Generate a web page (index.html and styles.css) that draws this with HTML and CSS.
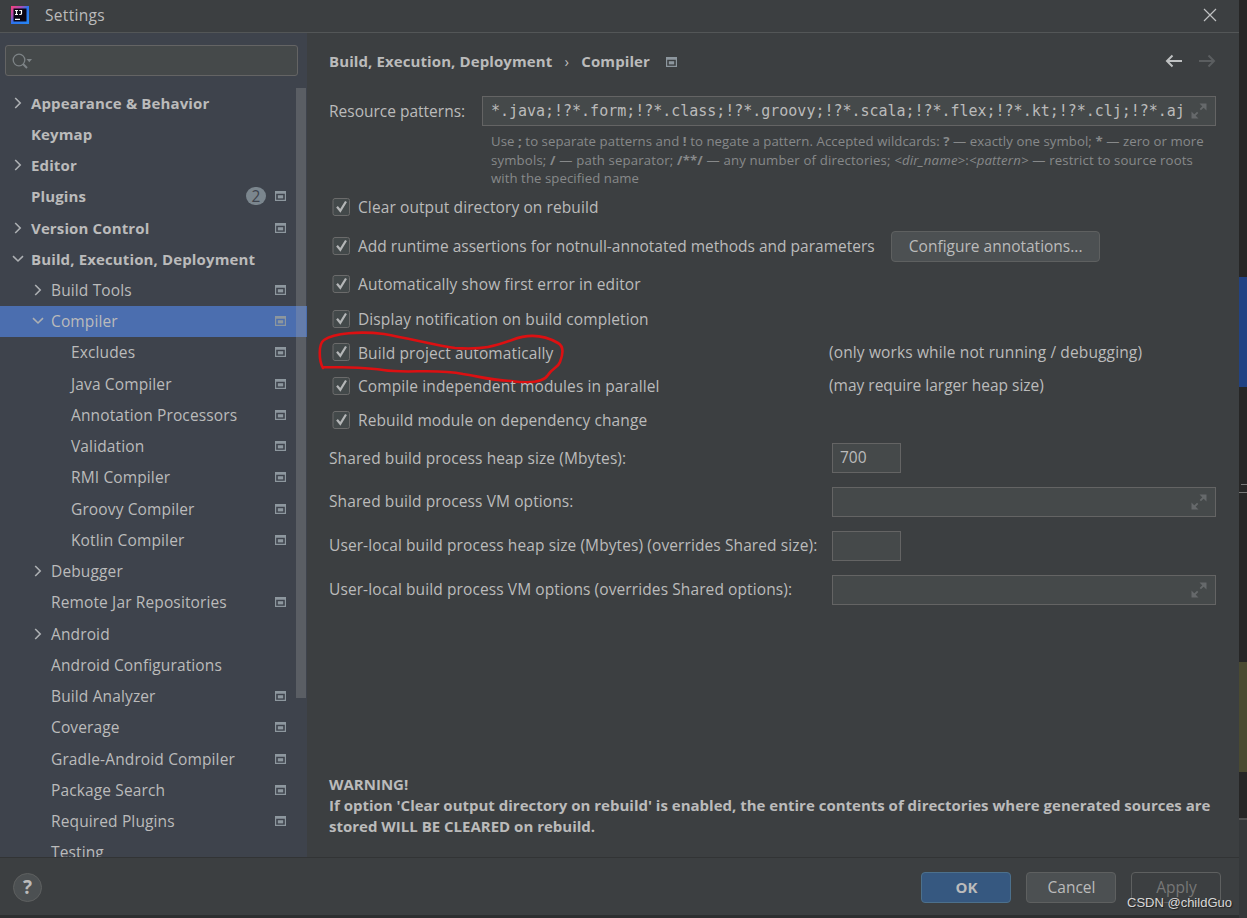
FILE: index.html
```
<!DOCTYPE html>
<html lang="en">
<head>
    <meta charset="UTF-8">
    <meta name="viewport" content="width=device-width, initial-scale=1.0">
    <title>Settings</title>
    <link rel="stylesheet" href="styles.css">
</head>
<body>
    <!-- Icons -->
    <svg class="sprite" width="0" height="0">
        <symbol id="right" viewBox="0 0 12 12"><path d="M3.2 1L8.200 6l-5 5" fill="none" stroke="currentColor" stroke-width="1.6"/></symbol>
        <symbol id="down" viewBox="0 0 12 12"><path d="M1 3.200L6 8l5-4.800" fill="none" stroke="currentColor" stroke-width="1.6"/></symbol>
        <symbol id="project" viewBox="0 0 11 10"><path d="M0 0h11v10H0zM1.200 2.800v6h8.600v-6z" fill="currentColor" fill-rule="evenodd"/><path d="M2.800 4.200h5.400v3.200H2.800z" fill="currentColor"/></symbol>
        <symbol id="check" viewBox="0 0 18 18"><rect x="1" y=".5" width="16.500" height="17" rx="2" fill="#43494a" stroke="#6b6b6b"/><path d="M5 8.800l3.300 4L14 3.500" fill="none" stroke="#b4b6b7" stroke-width="2.200"/></symbol>
        <symbol id="expand" viewBox="0 0 16 16"><path d="M8.500 0.500H15.500V7.500zM0.500 8.500V15.500H7.500z" fill="currentColor"/><path d="M14 2L9.300 6.700M2 14l4.700-4.700" stroke="currentColor" stroke-width="1.800"/></symbol>
    </svg>

    <div class="window">
        <div class="titlebar">
            <svg class="logo" width="18" height="18" viewBox="0 0 18 18">
                <defs>
                    <linearGradient id="lg" x1="0" y1="0" x2="1" y2="1">
                        <stop offset="0" stop-color="#f9417a"/>
                        <stop offset=".3" stop-color="#b04bb0"/>
                        <stop offset=".5" stop-color="#2b73ee"/>
                        <stop offset="1" stop-color="#2788f5"/>
                    </linearGradient>
                </defs>
                <rect width="18" height="18" fill="url(#lg)"/>
                <rect x="2.500" y="2.500" width="13" height="13" fill="#0b0614"/>
                <path d="M4 4.500h3M5.500 4.500v4M4 8.500h3M8.300 4.500h2.200v3q0 1-1.200 1h-1M4 13.300h5" fill="none" stroke="#fff" stroke-width="1.200"/>
            </svg>
            <span class="title">Settings</span>
            <svg class="close" width="14" height="14" viewBox="0 0 14 14"><path d="M1 1l12 12M13 1L1 13" stroke="#bfc1c2" stroke-width="1.200"/></svg>
        </div>

        <div class="body">
            <div class="sidebar">
                <div class="search">
                    <svg width="22" height="16" viewBox="0 0 22 16"><circle cx="7" cy="7" r="5.800" fill="none" stroke="#7d8386" stroke-width="1.300"/><path d="M11 11l4 4" stroke="#7d8386" stroke-width="2"/><path d="M14.500 6h5.500l-2.700 3.200z" fill="#7d8386"/></svg>
                </div>
                <div class="tree">
                    <div class="row bold"><svg class="arrow"><use href="#right"/></svg><span>Appearance &amp; Behavior</span></div>
                    <div class="row bold"><i class="arrow"></i><span>Keymap</span></div>
                    <div class="row bold"><svg class="arrow"><use href="#right"/></svg><span>Editor</span></div>
                    <div class="row bold"><i class="arrow"></i><span>Plugins</span><b class="count">2</b><svg class="project"><use href="#project"/></svg></div>
                    <div class="row bold"><svg class="arrow"><use href="#right"/></svg><span>Version Control</span><svg class="project"><use href="#project"/></svg></div>
                    <div class="row bold"><svg class="arrow"><use href="#down"/></svg><span>Build, Execution, Deployment</span></div>
                    <div class="row sub"><svg class="arrow"><use href="#right"/></svg><span>Build Tools</span><svg class="project"><use href="#project"/></svg></div>
                    <div class="row sub selected"><svg class="arrow"><use href="#down"/></svg><span>Compiler</span><svg class="project"><use href="#project"/></svg></div>
                    <div class="row leaf"><span>Excludes</span><svg class="project"><use href="#project"/></svg></div>
                    <div class="row leaf"><span>Java Compiler</span><svg class="project"><use href="#project"/></svg></div>
                    <div class="row leaf"><span>Annotation Processors</span><svg class="project"><use href="#project"/></svg></div>
                    <div class="row leaf"><span>Validation</span><svg class="project"><use href="#project"/></svg></div>
                    <div class="row leaf"><span>RMI Compiler</span><svg class="project"><use href="#project"/></svg></div>
                    <div class="row leaf"><span>Groovy Compiler</span><svg class="project"><use href="#project"/></svg></div>
                    <div class="row leaf"><span>Kotlin Compiler</span><svg class="project"><use href="#project"/></svg></div>
                    <div class="row sub"><svg class="arrow"><use href="#right"/></svg><span>Debugger</span></div>
                    <div class="row sub"><i class="arrow"></i><span>Remote Jar Repositories</span><svg class="project"><use href="#project"/></svg></div>
                    <div class="row sub"><svg class="arrow"><use href="#right"/></svg><span>Android</span></div>
                    <div class="row sub"><i class="arrow"></i><span>Android Configurations</span></div>
                    <div class="row sub"><i class="arrow"></i><span>Build Analyzer</span><svg class="project"><use href="#project"/></svg></div>
                    <div class="row sub"><i class="arrow"></i><span>Coverage</span><svg class="project"><use href="#project"/></svg></div>
                    <div class="row sub"><i class="arrow"></i><span>Gradle-Android Compiler</span><svg class="project"><use href="#project"/></svg></div>
                    <div class="row sub"><i class="arrow"></i><span>Package Search</span><svg class="project"><use href="#project"/></svg></div>
                    <div class="row sub"><i class="arrow"></i><span>Required Plugins</span><svg class="project"><use href="#project"/></svg></div>
                    <div class="row sub"><i class="arrow"></i><span>Testing</span></div>
                    <div class="scrollbar"></div>
                </div>
            </div>

            <div class="main">
                <div class="breadcrumb">
                    <span>Build, Execution, Deployment</span>
                    <span class="sep">›</span>
                    <span>Compiler</span>
                    <svg class="project"><use href="#project"/></svg>
                    <div class="nav">
                        <svg width="18" height="14" viewBox="0 0 18 14"><path d="M17 7H2M7.500 1.500L2 7l5.500 5.500" fill="none" stroke="#bfc1c2" stroke-width="2"/></svg>
                        <svg width="18" height="14" viewBox="0 0 18 14"><path d="M1 7h15M10.500 1.500L16 7l-5.500 5.500" fill="none" stroke="#5b5e60" stroke-width="2"/></svg>
                    </div>
                </div>

                <div class="patterns">
                    <label>Resource patterns:</label>
                    <div class="field">
                        <span class="value">*.java;!?*.form;!?*.class;!?*.groovy;!?*.scala;!?*.flex;!?*.kt;!?*.clj;!?*.aj</span>
                        <svg class="expand"><use href="#expand"/></svg>
                    </div>
                </div>
                <div class="hint">
                    <div>Use <b>;</b> to separate patterns and <b>!</b> to negate a pattern. Accepted wildcards: <b>?</b> — exactly one symbol; <b>*</b> — zero or more</div>
                    <div class="spaced">symbols; <b>/</b> — path separator; <b>/**/</b> — any number of directories; <em>&lt;dir_name&gt;</em>:<em>&lt;pattern&gt;</em> — restrict to source roots</div>
                    <div>with the specified name</div>
                </div>

                <div class="checks">
                    <div class="check first"><svg><use href="#check"/></svg><span>Clear output directory on rebuild</span></div>
                    <div class="check tall"><svg><use href="#check"/></svg><span>Add runtime assertions for notnull-annotated methods and parameters</span><button class="btn configure">Configure annotations...</button></div>
                    <div class="check third"><svg><use href="#check"/></svg><span>Automatically show first error in editor</span></div>
                    <div class="check"><svg><use href="#check"/></svg><span>Display notification on build completion</span></div>
                    <div class="check marked">
                        <svg><use href="#check"/></svg><span>Build project automatically</span><span class="note">(only works while not running / debugging)</span>
                        <svg class="circle" viewBox="0 0 250 56"><path d="M5 38C1 31 0 14 6 10C16 3 42 1 66 4C94 9 116 15 137 18C165 20 178 16 194 10C212 3 226 5 240 13C247 17 244 27 242 32C240 38 234 38 230 45C225 53 208 53 193 51C170 50 160 46 145 44C116 38 90 44 65 40C45 37 25 37 5 37" fill="none" stroke="#dc1012" stroke-width="2.600" stroke-linecap="round"/></svg>
                    </div>
                    <div class="check marked"><svg><use href="#check"/></svg><span>Compile independent modules in parallel</span><span class="note tight">(may require larger heap size)</span></div>
                    <div class="check"><svg><use href="#check"/></svg><span>Rebuild module on dependency change</span></div>
                </div>

                <div class="options">
                    <label>Shared build process heap size (Mbytes):</label><div class="input short">700</div>
                    <label>Shared build process VM options:</label><div class="input"><svg class="expand"><use href="#expand"/></svg></div>
                    <label>User-local build process heap size (Mbytes) (overrides Shared size):</label><div class="input short"></div>
                    <label>User-local build process VM options (overrides Shared options):</label><div class="input"><svg class="expand"><use href="#expand"/></svg></div>
                </div>

                <div class="warning">WARNING!<br>If option 'Clear output directory on rebuild' is enabled, the entire contents of directories where generated sources are<br>stored WILL BE CLEARED on rebuild.</div>
            </div>
        </div>

        <div class="footer">
            <div class="help">?</div>
            <button class="btn primary">OK</button>
            <button class="btn">Cancel</button>
            <button class="btn disabled">Apply</button>
        </div>
    </div>

    <!-- Editor showing behind the dialog -->
    <div class="behind">
        <div class="blue"></div>
        <div class="line one"></div>
        <div class="line two"></div>
        <div class="olive"></div>
        <div class="status"></div>
    </div>

    <div class="watermark">CSDN @childGuo</div>
</body>
</html>
```
FILE: styles.css
```
* {
    box-sizing: border-box;
}
body {
    margin: 0;
    width: 1247px;
    height: 918px;
    overflow: hidden;
    display: flex;
    background: #2b2b2b;
    color: #bbbbbb;
    font-family: 'Open Sans', 'Noto Sans', sans-serif;
    font-size: 15.500px;
}
svg {
    flex: none;
}
.sprite {
    position: absolute;
}
.window {
    width: 1239px;
    height: 918px;
    display: flex;
    flex-direction: column;
    background: #3c3f41;
    border-bottom: 3px solid #2d2f30;
}
.titlebar {
    height: 33px;
    display: flex;
    align-items: center;
    padding: 0 22px 2px 11px;
    border-bottom: 1px solid #535657;
}
.title {
    margin-left: 16px;
    letter-spacing: 0.300px;
}
.close {
    margin-left: auto;
}
.body {
    height: 824px;
    display: flex;
}

/* Sidebar */
.sidebar {
    width: 307px;
    background: #3e434c;
    overflow: hidden;
}
.search {
    width: 293px;
    height: 31px;
    margin: 12px 0 0 5px;
    padding: 7px 6px;
    background: #45494a;
    border: 1px solid #646464;
    border-radius: 3px;
}
.search svg {
    display: block;
}
.tree {
    position: relative;
    margin-top: 11.300px;
}
.row {
    height: 31.240px;
    display: flex;
    align-items: center;
    padding: 0 21px 0.600px 12px;
    letter-spacing: 0.130px;
    white-space: nowrap;
}
.row.sub {
    padding-left: 32px;
}
.row.leaf {
    padding-left: 71px;
}
.row.bold > span {
    font-size: 15px;
    font-weight: 700;
}
.row.selected {
    background: #4b6eaf;
}
.arrow {
    width: 12px;
    height: 12px;
    margin-right: 7px;
    flex: none;
    color: #adb0b3;
}
.project {
    width: 11px;
    height: 10px;
    margin-left: auto;
    color: #8d979e;
}
.count {
    width: 20px;
    height: 18px;
    margin-left: auto;
    border-radius: 9px;
    background: #7b868e;
    color: #3e434c;
    font-weight: 400;
    line-height: 18px;
    text-align: center;
}
.count + .project {
    margin-left: 9px;
}
.scrollbar {
    position: absolute;
    left: 296px;
    top: 0.700px;
    width: 10px;
    height: 610px;
    background: rgba(166, 166, 166, 0.28);
}

/* Main panel */
.main {
    width: 932px;
    padding: 0 23px 0 22px;
    white-space: nowrap;
    overflow: hidden;
}
.breadcrumb {
    height: 57px;
    display: flex;
    align-items: center;
    padding-bottom: 1px;
    font-size: 15px;
    font-weight: 700;
    letter-spacing: 0.100px;
}
.breadcrumb .sep {
    width: 29px;
    text-align: center;
    font-weight: 400;
}
.breadcrumb .project {
    margin: 1px 0 0 16px;
}
.nav {
    margin-left: auto;
    display: flex;
    gap: 15px;
}
.patterns {
    display: flex;
    align-items: center;
    margin-top: 6px;
}
.patterns label {
    width: 153px;
    padding-bottom: 1px;
}
.field {
    width: 734px;
    height: 30px;
    display: flex;
    align-items: center;
    justify-content: space-between;
    padding: 0 8px;
    background: #45494a;
    border: 1px solid #646464;
}
.value {
    font-family: 'DejaVu Sans Mono', monospace;
    font-size: 15px;
    letter-spacing: -0.020px;
}
.expand {
    width: 16px;
    height: 16px;
    color: #66696b;
}
.hint {
    margin: 6px 0 0 162px;
    color: #87898a;
    font-size: 13.200px;
    line-height: 18.500px;
    letter-spacing: 0.070px;
}
.hint .spaced {
    letter-spacing: 0.160px;
}
.checks {
    padding: 0.500px 0 0 3px;
    letter-spacing: 0.100px;
}
.check {
    height: 33.700px;
    display: flex;
    align-items: center;
}
.check > svg:first-child {
    width: 18px;
    height: 18px;
    margin: 0 8px 0.500px 0;
}
.check.first {
    height: 38px;
}
.check.tall {
    height: 40px;
    letter-spacing: 0;
}
.check.third {
    height: 36px;
}
.check.marked {
    position: relative;
}
.note {
    position: absolute;
    left: 497px;
    margin-top: -2px;
    letter-spacing: 0.130px;
}
.note.tight {
    letter-spacing: 0;
}
.circle {
    position: absolute;
    left: -14px;
    top: -6px;
    width: 250px;
    height: 56px;
}
.btn {
    width: 90px;
    height: 31px;
    padding: 0 0 0 1px;
    border: 1px solid #5e6060;
    border-radius: 4px;
    background: #4c5052;
    color: #bbbbbb;
    font: inherit;
}
.configure {
    width: 209px;
    margin-left: 16px;
}
.options {
    display: grid;
    grid-template-columns: 503px 384px;
    row-gap: 13.800px;
    align-items: center;
    margin-top: 6.500px;
}
.options label {
    padding-bottom: 1.500px;
    letter-spacing: 0.100px;
}
.input {
    height: 30px;
    display: flex;
    align-items: center;
    justify-content: flex-end;
    padding: 0 8px;
    background: #45494a;
    border: 1px solid #646464;
}
.input.short {
    width: 69px;
    padding: 0 7px 2px;
    justify-content: flex-start;
}
.warning {
    margin-top: 169.200px;
    font-size: 15px;
    font-weight: 700;
    line-height: 21px;
}

/* Footer */
.footer {
    height: 58px;
    display: flex;
    align-items: center;
    gap: 15px;
    padding: 1px 18px 0 13px;
    border-top: 1px solid #323435;
}
.help {
    width: 29px;
    height: 29px;
    margin-right: auto;
    border: 1px solid #5e6060;
    border-radius: 50%;
    background: #4c5052;
    font-size: 19px;
    font-weight: 700;
    line-height: 27px;
    text-align: center;
}
.primary {
    background: #365880;
    border-color: #4c708c;
    font-size: 15px;
    font-weight: 700;
}
.disabled {
    background: none;
    color: #777777;
}

/* Right edge */
.behind {
    width: 8px;
    height: 918px;
    background: #262626;
}
.blue {
    height: 110px;
    margin-top: 277px;
    background: #214283;
}
.line {
    height: 1px;
    background: #777777;
}
.line.one {
    margin: 97px 0 0 2px;
}
.line.two {
    margin-top: 7px;
}
.olive {
    height: 110px;
    margin-top: 169px;
    background: #4a4a31;
}
.status {
    height: 100px;
    margin-top: 46px;
    border-top: 2px solid #515151;
    background: #35383a;
}
.watermark {
    position: absolute;
    left: 1127px;
    top: 894px;
    color: #d8d8d8;
    font-family: 'Liberation Sans', sans-serif;
    font-size: 13px;
    line-height: 17px;
    white-space: nowrap;
    text-shadow: 1px 1px 1px #222222;
}
```
